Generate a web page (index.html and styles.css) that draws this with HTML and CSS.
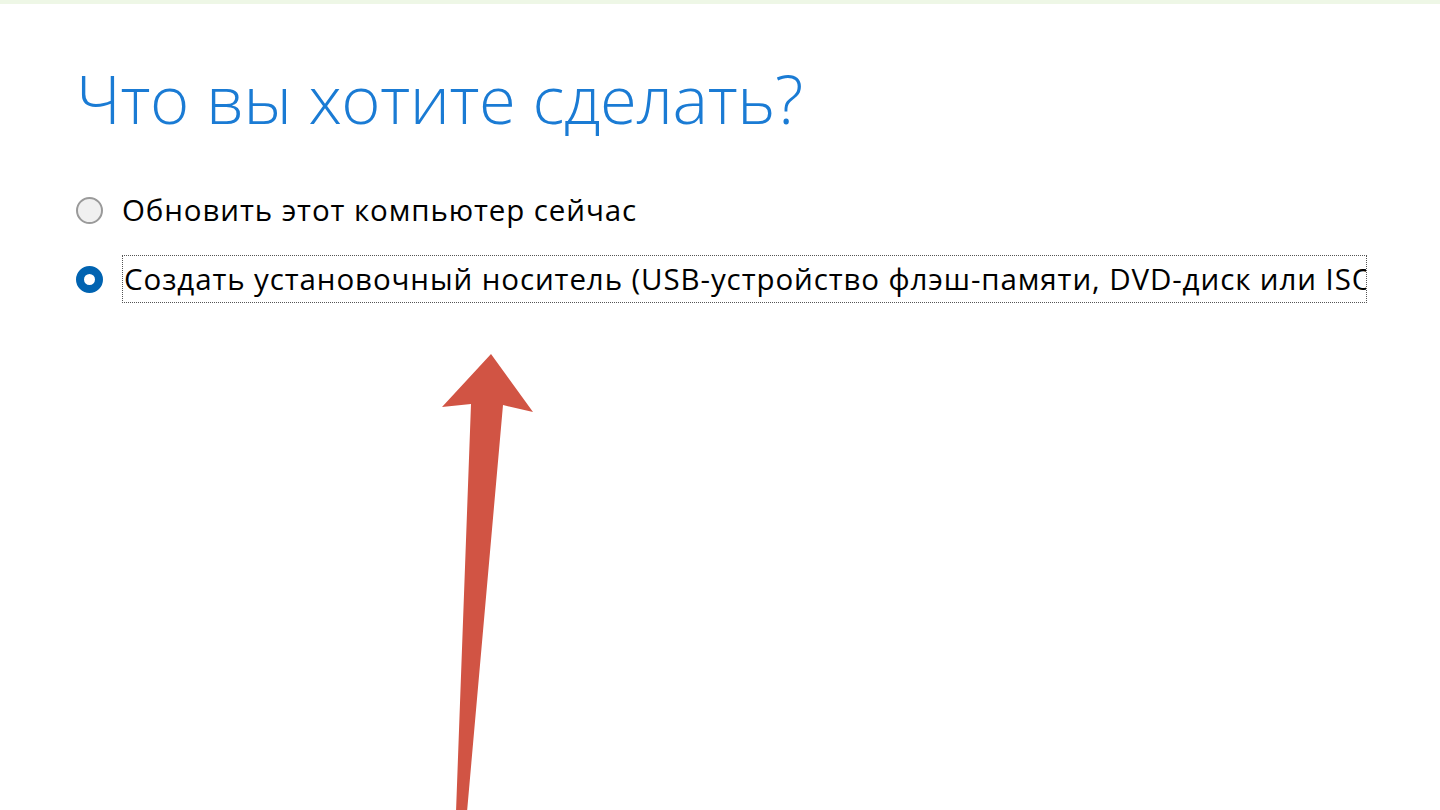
FILE: index.html
```html
<!DOCTYPE html>
<html lang="ru">
<head>
<meta charset="utf-8">
<title>Что вы хотите сделать?</title>
<link rel="stylesheet" href="styles.css">
</head>
<body>
<div class="topstrip"></div>
<main class="page">
  <h1 class="title">Что вы хотите сделать?</h1>
  <div class="options">
    <label class="option">
      <span class="radio"></span>
      <span class="label">Обновить этот компьютер сейчас</span>
    </label>
    <label class="option">
      <span class="radio checked"></span>
      <span class="label focus">Создать установочный носитель (USB-устройство флэш-памяти, DVD-диск или ISO-файл) для другого компьютера</span>
    </label>
  </div>
</main>
<svg class="arrow" width="1440" height="810" viewBox="0 0 1440 810" aria-hidden="true">
  <polygon points="491,354 533,412 503,405 467,812 456,812 471,404 442,407" fill="#d15444"/>
</svg>
</body>
</html>
```
FILE: styles.css
```css
html, body {
  margin: 0;
  padding: 0;
  background: #ffffff;
  width: 1440px;
  height: 810px;
  overflow: hidden;
}
body {
  position: relative;
  font-family: "Open Sans", "Noto Sans", sans-serif;
}
.topstrip {
  height: 4px;
  background: #eef7e6;
}
.page {
  padding-left: 76px;
}
.title {
  margin: 0;
  padding-top: 46px;
  font-size: 67px;
  font-weight: 300;
  line-height: 96px;
  color: #1a7bd4;
  letter-spacing: -0.4px;
}
.options {
  margin-top: 40px;
  display: flex;
  flex-direction: column;
  gap: 21px;
}
.option {
  display: flex;
  align-items: center;
  gap: 19px;
  height: 48px;
}
.radio {
  flex: none;
  box-sizing: border-box;
  width: 27px;
  height: 27px;
  border-radius: 50%;
  border: 2px solid #9a9a9a;
  background: #f0f0f0;
}
.radio.checked {
  border: 8.5px solid #0063b1;
  background: #ffffff;
}
.label {
  font-size: 29.5px;
  letter-spacing: 0.9px;
  color: #000000;
  white-space: nowrap;
  line-height: 44px;
}
.label.focus {
  box-sizing: border-box;
  width: 1245px;
  overflow: hidden;
  border: 1px dotted #555555;
  padding-left: 1px;
  height: 48px;
  line-height: 46px;
}
.arrow {
  position: absolute;
  left: 0;
  top: 0;
  pointer-events: none;
}
```
